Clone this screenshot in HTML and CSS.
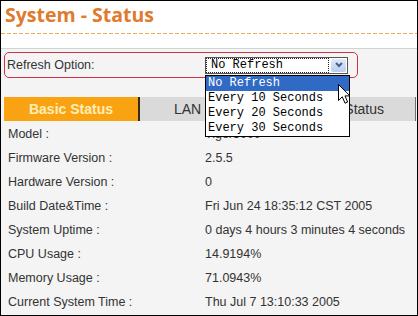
FILE: index.html
```html
<!DOCTYPE html>
<html>
<head>
<meta charset="utf-8">
<link rel="stylesheet" href="styles.css">
</head>
<body>
<div class="frame">
  <header class="head">
    <h1 class="title">System - Status</h1>
    <div class="dash"></div>
  </header>
  <main class="content">
    <div class="refresh">
      <span class="refresh-label">Refresh Option:</span>
      <div class="select-wrap">
        <div class="select">
          <span class="select-value">No Refresh</span>
          <span class="select-btn"><svg width="10" height="8" viewBox="0 0 10 8"><polyline points="2,2 5,5 8,2" fill="none" stroke="#4a5f86" stroke-width="2"/></svg></span>
        </div>
        <ul class="options">
          <li class="sel">No Refresh</li>
          <li>Every 10 Seconds</li>
          <li>Every 20 Seconds</li>
          <li>Every 30 Seconds</li>
        </ul>
        <svg class="cursor" width="13" height="21" viewBox="0 0 13 21"><path d="M0.5 0.5 L0.5 16.5 L4.3 12.8 L7 19.2 L9.6 18.1 L7 11.9 L12 11.9 Z" fill="#fff" stroke="#000" stroke-width="1" stroke-linejoin="miter"/></svg>
      </div>
    </div>
    <div class="tabs">
      <div class="tab tab-active">Basic Status</div>
      <div class="tab tab-lan">LAN</div>
      <div class="tab tab-wlan">WLAN Status</div>
    </div>
    <div class="info">
      <div class="row"><span class="label">Model :</span><span class="value">Tiger3000</span></div>
      <div class="row"><span class="label">Firmware Version :</span><span class="value">2.5.5</span></div>
      <div class="row"><span class="label">Hardware Version :</span><span class="value">0</span></div>
      <div class="row"><span class="label">Build Date&amp;Time :</span><span class="value">Fri Jun 24 18:35:12 CST 2005</span></div>
      <div class="row"><span class="label">System Uptime :</span><span class="value">0 days 4 hours 3 minutes 4 seconds</span></div>
      <div class="row"><span class="label">CPU Usage :</span><span class="value">14.9194%</span></div>
      <div class="row"><span class="label">Memory Usage :</span><span class="value">71.0943%</span></div>
      <div class="row"><span class="label">Current System Time :</span><span class="value">Thu Jul 7 13:10:33 2005</span></div>
    </div>
  </main>
</div>
</body>
</html>
```
FILE: styles.css
```css
html, body {
  margin: 0;
  background: #fff;
}
.frame {
  width: 418px;
  height: 316px;
  box-sizing: border-box;
  border: 1px solid #000;
  background: #f4f4f4;
  font-family: "Liberation Sans", Arial, sans-serif;
  color: #333;
  overflow: hidden;
}
.head {
  height: 47px;
  background: #fff;
  border-bottom: 1px solid #d2d2d2;
}
.title {
  margin: 0;
  padding: 2px 0 0 4px;
  font: 700 19.5px/24px "Open Sans", sans-serif;
  color: #e07a2c;
}
.dash {
  margin-top: 6px;
  height: 1px;
  background: repeating-linear-gradient(90deg, #eaa85c 0 4px, transparent 4px 6px);
}
.content {
  padding: 3px 1px 0 3px;
}
.refresh {
  display: flex;
  align-items: center;
  width: 354px;
  height: 26px;
  box-sizing: border-box;
  border: 1px solid #cc3447;
  border-radius: 5px;
  padding: 0 2px;
  font-size: 12.5px;
}
.refresh-label {
  width: 198px;
}
.select-wrap {
  position: relative;
}
.select {
  display: flex;
  width: 143px;
  height: 17px;
  box-sizing: border-box;
  border: 1px solid #555;
  background: #fff;
}
.select-value {
  flex: 1;
  margin: 0 1px 0 0;
  border: 1px dotted #222;
  padding-left: 4px;
  font: 12px/13px "Liberation Mono", monospace;
  color: #000;
}
.select-btn {
  width: 15px;
  margin: 1px;
  border-radius: 2px;
  background: linear-gradient(#e0eafa, #b8cdef);
  display: flex;
  align-items: center;
  justify-content: center;
}
.options {
  position: absolute;
  top: 18px;
  left: 0;
  z-index: 2;
  width: 145px;
  box-sizing: border-box;
  margin: 0;
  padding: 0;
  list-style: none;
  background: #fff;
  border: 1px solid #000;
  font: 12px/15px "Liberation Mono", monospace;
  color: #000;
}
.options li {
  height: 15px;
  padding-left: 2px;
}
.options .sel {
  background: #316ac5;
  color: #fff;
}
.cursor {
  position: absolute;
  left: 133px;
  top: 27px;
  z-index: 3;
}
.tabs {
  display: flex;
  height: 24px;
  margin-top: 19px;
}
.tab {
  display: flex;
  align-items: center;
  justify-content: center;
  font-size: 14px;
  background: #dadada;
  color: #333;
}
.tab-active {
  width: 134px;
  background: #f9a312;
  color: #ffeeb8;
  font-weight: 700;
  border-right: 2px solid #3a2c14;
}
.tab-lan {
  width: 95px;
}
.tab-wlan {
  flex: 1;
  justify-content: flex-end;
  padding-right: 31px;
  border-right: 1px solid #6e6e6e;
}
.info {
  margin-top: 1px;
}
.row {
  display: flex;
  align-items: center;
  height: 24px;
  padding-left: 4px;
  font-size: 12.5px;
}
.label {
  width: 197px;
}
```
